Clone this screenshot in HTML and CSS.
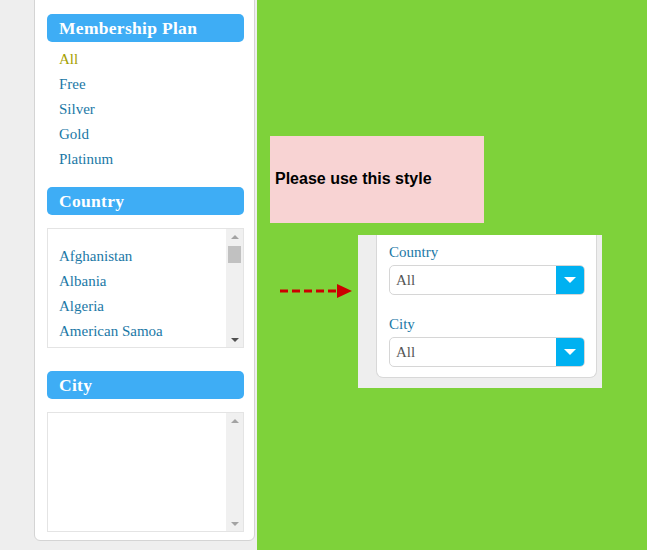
FILE: index.html
```html
<!DOCTYPE html>
<html>
<head>
<meta charset="utf-8">
<link rel="stylesheet" href="styles.css">
</head>
<body>
<div class="page">
  <aside class="side">
    <div class="card">
      <div class="head">Membership Plan</div>
      <ul class="plans">
        <li class="active">All</li>
        <li>Free</li>
        <li>Silver</li>
        <li>Gold</li>
        <li>Platinum</li>
      </ul>
      <div class="head head2">Country</div>
      <div class="listbox">
        <ul class="items">
          <li>Afghanistan</li>
          <li>Albania</li>
          <li>Algeria</li>
          <li>American Samoa</li>
        </ul>
        <div class="sbar">
          <span class="up"></span>
          <span class="thumb"></span>
          <span class="down"></span>
        </div>
      </div>
      <div class="head head3">City</div>
      <div class="listbox city">
        <ul class="items"></ul>
        <div class="sbar">
          <span class="up"></span>
          <span class="down"></span>
        </div>
      </div>
    </div>
  </aside>
  <main class="canvas">
    <div class="note">Please use this style</div>
    <div class="row">
      <svg class="arrow" width="76" height="16" viewBox="0 0 76 16">
        <line x1="3" y1="8" x2="62" y2="8" stroke="#cc0000" stroke-width="3" stroke-dasharray="8 4"/>
        <polygon points="60,1 75,8 60,15" fill="#cc0000"/>
      </svg>
      <div class="shot">
        <div class="scard">
          <div class="field">
            <label class="lbl">Country</label>
            <div class="select"><span class="val">All</span><span class="btn"><i class="tri"></i></span></div>
          </div>
          <div class="field">
            <label class="lbl">City</label>
            <div class="select"><span class="val">All</span><span class="btn"><i class="tri"></i></span></div>
          </div>
        </div>
      </div>
    </div>
  </main>
</div>
</body>
</html>
```

FILE: styles.css
```css
* { box-sizing: border-box; }
html, body { margin: 0; padding: 0; }
body {
  width: 647px;
  height: 550px;
  overflow: hidden;
  background: #eeeeee;
  font-family: "Liberation Serif", "DejaVu Serif", serif;
}
.page {
  display: flex;
  height: 550px;
}
.side {
  width: 257px;
  flex: none;
  background: #eeeeee;
}
.card {
  margin-left: 34px;
  width: 221px;
  margin-top: -10px;
  height: 551px;
  background: #fff;
  border: 1px solid #d4d4d4;
  border-radius: 6px;
  padding: 23px 10px 8px 12px;
}
.head {
  height: 28px;
  background: #3eadf5;
  border-radius: 5px;
  color: #fff;
  font-weight: bold;
  font-size: 17.5px;
  line-height: 28px;
  padding-left: 12px;
  letter-spacing: 0.3px;
}
.plans {
  list-style: none;
  margin: 5px 0 0;
  padding: 0 0 0 12px;
}
.plans li {
  height: 25px;
  line-height: 25px;
  font-size: 15px;
  color: #1b78a6;
}
.plans li.active { color: #a5a000; }
.head2 { margin-top: 15px; }
.head3 { margin-top: 23px; }
.listbox {
  margin-top: 13px;
  height: 120px;
  border: 1px solid #e4e4e4;
  display: flex;
}
.items {
  flex: 1;
  list-style: none;
  margin: 0;
  padding: 15px 0 0 11px;
  overflow: hidden;
}
.items li {
  height: 25px;
  line-height: 25px;
  font-size: 15px;
  color: #1b78a6;
  white-space: nowrap;
}
.sbar {
  width: 17px;
  flex: none;
  background: #f0f0f0;
  display: flex;
  flex-direction: column;
  align-items: center;
  padding: 6px 0 5px;
}
.up {
  width: 0; height: 0;
  border-left: 4px solid transparent;
  border-right: 4px solid transparent;
  border-bottom: 4px solid #a3a3a3;
}
.thumb {
  width: 13px;
  height: 17px;
  background: #c1c1c1;
  margin-top: 7px;
}
.down {
  margin-top: auto;
  width: 0; height: 0;
  border-left: 4px solid transparent;
  border-right: 4px solid transparent;
  border-top: 4px solid #505050;
}
.city .down { border-top-color: #a3a3a3; }

.canvas {
  flex: 1;
  background: #7ed23a;
  padding: 136px 0 0 13px;
}
.note {
  width: 214px;
  height: 87px;
  background: #f8d3d3;
  font-family: "Liberation Sans", Arial, sans-serif;
  font-weight: bold;
  font-size: 16px;
  color: #000;
  padding-left: 5px;
  display: flex;
  align-items: center;
  padding-bottom: 2px;
}
.row {
  display: flex;
  align-items: flex-start;
  margin-top: 12px;
}
.arrow {
  margin-top: 48px;
  margin-left: 7px;
  flex: none;
}
.shot {
  margin-left: 5px;
  width: 244px;
  height: 153px;
  background: #eeeeee;
  padding: 0 5px 0 18px;
}
.scard {
  background: #fff;
  height: 143px;
  border: 1px solid #d8d8d8;
  border-top: none;
  border-radius: 0 0 7px 7px;
  padding: 6px 11px 0 12px;
}
.field + .field { margin-top: 18px; }
.lbl {
  display: block;
  font-size: 15px;
  line-height: 22px;
  color: #1b78a6;
  margin-bottom: 2px;
}
.select {
  display: flex;
  height: 30px;
  border: 1px solid #d6d6d6;
  border-radius: 5px;
  overflow: hidden;
}
.val {
  flex: 1;
  font-size: 15px;
  line-height: 28px;
  color: #555;
  padding-left: 6px;
}
.btn {
  width: 28px;
  background: #00b1f1;
  display: flex;
  align-items: center;
  justify-content: center;
}
.tri {
  width: 0; height: 0;
  border-left: 6px solid transparent;
  border-right: 6px solid transparent;
  border-top: 6px solid #fff;
}
```
